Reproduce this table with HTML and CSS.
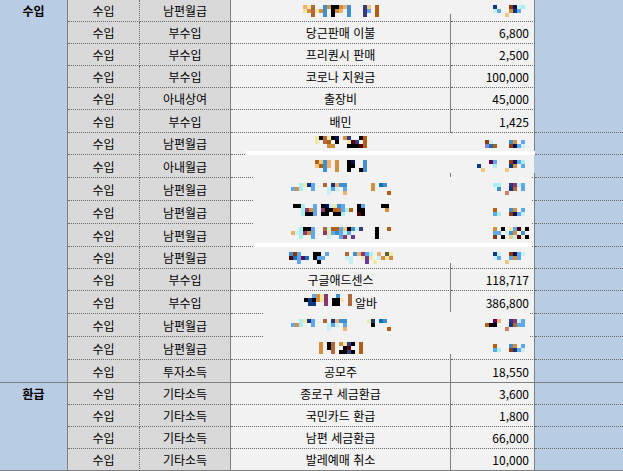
FILE: index.html
```html
<!DOCTYPE html>
<html lang="ko">
<head>
    <meta charset="UTF-8">
    <title>수입 내역</title>
    <link rel="stylesheet" href="styles.css">
</head>
<body>
    <div class="sheet">
        <div class="grp">수입</div>

        <div class="kind">수입</div><div class="cat">남편월급</div>
        <div class="desc"><span class="mosaic" data-px="agb..dceecad...fo.n/gcbgcd.eca.d...fh.n/..b..d.e...d...f..n"></span></div>
        <div class="amt"><span class="mosaic" data-px="k...lmij./ih..ckh../...o....."></span></div>
        <div class="pad open"></div>

        <div class="kind">수입</div><div class="cat">부수입</div><div class="desc">당근판매 이불</div><div class="amt">6,800</div><div class="pad open"></div>
        <div class="kind">수입</div><div class="cat">부수입</div><div class="desc">프리퀀시 판매</div><div class="amt">2,500</div><div class="pad open"></div>
        <div class="kind">수입</div><div class="cat">부수입</div><div class="desc">코로나 지원금</div><div class="amt">100,000</div><div class="pad open"></div>
        <div class="kind">수입</div><div class="cat">아내상여</div><div class="desc">출장비</div><div class="amt">45,000</div><div class="pad open"></div>
        <div class="kind">수입</div><div class="cat">부수입</div><div class="desc">배민</div><div class="amt">1,425</div><div class="pad"></div>

        <div class="kind">수입</div><div class="cat">남편월급</div>
        <div class="desc"><span class="mosaic up" data-px="gebgem.cf..en/g.bn.e..gpf.n/...cc...eeepn"></span></div>
        <div class="amt"><span class="mosaic" data-px="li....dc.h./stn...lmhi."></span></div>
        <div class="pad"></div>

        <div class="kind">수입</div><div class="cat">아내월급</div>
        <div class="desc"><span class="mosaic" data-px="noda.c..em..d/onda.c..ee..d/..d..c..e..ed"></span></div>
        <div class="amt"><span class="mosaic" data-px="...wh...lmhj./k...j...kc.h./.o.....o....."></span></div>
        <div class="pad"></div>

        <div class="kind">수입</div><div class="cat">남편월급</div>
        <div class="desc"><span class="mosaic" data-px="..jgkh..b.kadd......c.td./hcj..h...ihi.h......c..../.........i...a..........n"></span></div>
        <div class="amt"><span class="mosaic" data-px="jj..fqih./.d..kb.h./...u....."></span></div>
        <div class="pad"></div>

        <div class="kind">수입</div><div class="cat">남편월급</div>
        <div class="desc"><span class="mosaic up" data-px="eej..h.emigdh...eh....ee/..jqch.qeenbhjn.ee.....c/..jeeh.ee.eej...pe......"></span></div>
        <div class="amt"><span class="mosaic" data-px="n...dc.h./hj..lmhi."></span></div>
        <div class="pad"></div>

        <div class="kind">수입</div><div class="cat">남편월급</div>
        <div class="desc"><span class="mosaic up" data-px="..jeeh..binnhoedif...e..n/aijqch..qghdhih......e.../..j..h...i..hq.r.....e..."></span></div>
        <div class="amt"><span class="mosaic up" data-px="c.e.ghp.e/hh.idc.d./l.e.oip.e"></span></div>
        <div class="pad"></div>

        <div class="kind">수입</div><div class="cat">남편월급</div>
        <div class="desc"><span class="mosaic" data-px="dlh...ee.h....b.daqhj.a.vg/pthwt.ehh.....ii..grg.icgc/..h....e.......i...r.g...."></span></div>
        <div class="amt"><span class="mosaic" data-px="ki..lmhi./ih..hch../...o....."></span></div>
        <div class="pad"></div>

        <div class="kind">수입</div><div class="cat">부수입</div><div class="desc">구글애드센스</div><div class="amt">118,717</div><div class="pad"></div>

        <div class="kind">수입</div><div class="cat">부수입</div>
        <div class="desc"><span class="mosaic up" data-px="..hcgq..d..b/ekecgq.eeg.b/.kk..q.ee..b"></span><span class="tail">알바</span></div>
        <div class="amt">386,800</div>
        <div class="pad"></div>

        <div class="kind">수입</div><div class="cat">남편월급</div>
        <div class="desc"><span class="mosaic" data-px="..jgkh..b.kadd.....gk.td./hcj..h...ihi.h......e..../.........i...a..........n"></span></div>
        <div class="amt"><span class="mosaic" data-px="..wa..fqih./nee...kbhh./.....u....."></span></div>
        <div class="pad"></div>

        <div class="kind">수입</div><div class="cat">남편월급</div>
        <div class="desc"><span class="mosaic" data-px="c.eb.cgfe.n/c.eb..ep..n/c..b.eefe.n"></span></div>
        <div class="amt"><span class="mosaic" data-px="n...dc.h./hj..lkhi."></span></div>
        <div class="pad"></div>

        <div class="kind end">수입</div><div class="cat end">투자소득</div><div class="desc end">공모주</div><div class="amt end">18,550</div><div class="pad end"></div>

        <div class="grp refund">환급</div>
        <div class="kind">수입</div><div class="cat">기타소득</div><div class="desc">종로구 세금환급</div><div class="amt">3,600</div><div class="pad"></div>
        <div class="kind">수입</div><div class="cat">기타소득</div><div class="desc">국민카드 환급</div><div class="amt">1,800</div><div class="pad"></div>
        <div class="kind">수입</div><div class="cat">기타소득</div><div class="desc">남편 세금환급</div><div class="amt">66,000</div><div class="pad"></div>
        <div class="kind end">수입</div><div class="cat end">기타소득</div><div class="desc end">발레예매 취소</div><div class="amt end">10,000</div><div class="pad end"></div>

        <!-- leftovers of the blurred area, they hide some grid lines -->
        <span class="patch v-top"></span>
        <span class="patch v-mid1"></span>
        <span class="patch v-mid2"></span>
        <span class="patch v-low"></span>
        <span class="patch h177"></span>
        <span class="patch h200"></span>
        <span class="patch h223"></span>
        <span class="patch h313"></span>
        <span class="patch h336"></span>
        <span class="patch edge"></span>
        <span class="patch band1"></span>
        <span class="patch band2"></span>
    </div>

    <script src="mosaic.js"></script>
</body>
</html>
```

FILE: styles.css
```css
body {
    margin: 0;
    background: #fff;
    font-family: "Noto Sans CJK KR", "Noto Sans", sans-serif;
    font-size: 12px;
    color: #000;
}
.sheet {
    position: relative;
    display: grid;
    grid-template-columns: 68px 72px 91px 220px 84px 88px;
    grid-template-rows: 22px 22px 22px 22px 22px 23px 22px 23px 23px 23px 23px 22px 22px 23px 23px 23px 23px 22px 22px 22px 22px;
    width: 623px;
}
.sheet > div {
    box-sizing: border-box;
    display: flex;
    align-items: center;
    justify-content: center;
    white-space: nowrap;
    border-bottom: 1px dotted #6a6a6a;
}
.sheet > .grp {
    grid-row: span 17;
    align-items: flex-start;
    background: #b8cce4;
    border-right: 1px solid #808080;
    border-bottom: 1px solid #808080;
    font-weight: 700;
    line-height: 21px;
}
.sheet > .refund {
    grid-row: span 4;
}
.kind {
    background: #d9d9d9;
    border-right: 1px dotted #6a6a6a;
}
.cat {
    background: #d9d9d9;
    border-right: 1px solid #808080;
}
.desc {
    background: #f2f2f2;
    border-right: 1px solid #808080;
}
.sheet > .amt {
    justify-content: flex-end;
    padding-right: 5px;
    background: #f2f2f2;
    border-right: 1px solid #808080;
}
.pad {
    background: #b8cce4;
}
.sheet > .open {
    border-bottom: none;
}
.sheet > .end {
    border-bottom: 1px solid #808080;
}
.mosaic svg {
    display: block;
}
.mosaic.up {
    margin-top: -4px;
}
.tail {
    margin-left: 3px;
}

/* cover-ups */
.patch {
    position: absolute;
    background: #f2f2f2;
}
.v-top { left: 450px; top: 0; width: 1px; height: 14px; }
.v-mid1 { left: 450px; top: 133px; width: 1px; height: 40px; }
.v-mid2 { left: 450px; top: 177px; width: 1px; height: 86px; }
.v-low { left: 450px; top: 312px; width: 1px; height: 42px; }
.h177 { left: 253px; top: 177px; width: 279px; height: 1px; }
.h200 { left: 253px; top: 200px; width: 279px; height: 1px; }
.h223 { left: 253px; top: 223px; width: 279px; height: 1px; }
.h313 { left: 264px; top: 313px; width: 266px; height: 1px; }
.h336 { left: 264px; top: 336px; width: 266px; height: 1px; }
.edge { left: 534px; top: 155px; width: 1px; height: 18px; background: #b8cce4; }
.band1 { left: 246px; top: 151px; width: 289px; height: 4px; background: #fff; }
.band2 { left: 253px; top: 243px; width: 279px; height: 4px; background: #fff; }
```

FILE: mosaic.js
```js
// blurred cells: each letter is one 4px block
const palette = {
    a: '#f0b070', b: '#b06838', c: '#d09040', d: '#4090d0', e: '#000000',
    f: '#383880', g: '#f0e8a8', h: '#60a8e8', i: '#c8f0f0', j: '#a8f0f0',
    k: '#103880', l: '#8b3a10', m: '#0a1050', n: '#b06010', o: '#f0c880',
    p: '#500000', q: '#8a3a6a', r: '#6a3a9a', s: '#8880d0', t: '#1070b8',
    u: '#d08060', v: '#606030', w: '#600060'
};
const ns = 'http://www.w3.org/2000/svg';

document.querySelectorAll('.mosaic').forEach(el => {
    const rows = el.dataset.px.split('/');
    const cols = Math.max(...rows.map(r => r.length));
    const svg = document.createElementNS(ns, 'svg');
    svg.setAttribute('width', cols * 4);
    svg.setAttribute('height', rows.length * 4);
    svg.setAttribute('shape-rendering', 'crispEdges');
    rows.forEach((row, y) => {
        [...row].forEach((ch, x) => {
            if (!palette[ch]) return;
            const r = document.createElementNS(ns, 'rect');
            r.setAttribute('x', x * 4);
            r.setAttribute('y', y * 4);
            r.setAttribute('width', 4);
            r.setAttribute('height', 4);
            r.setAttribute('fill', palette[ch]);
            svg.appendChild(r);
        });
    });
    el.appendChild(svg);
});
```
